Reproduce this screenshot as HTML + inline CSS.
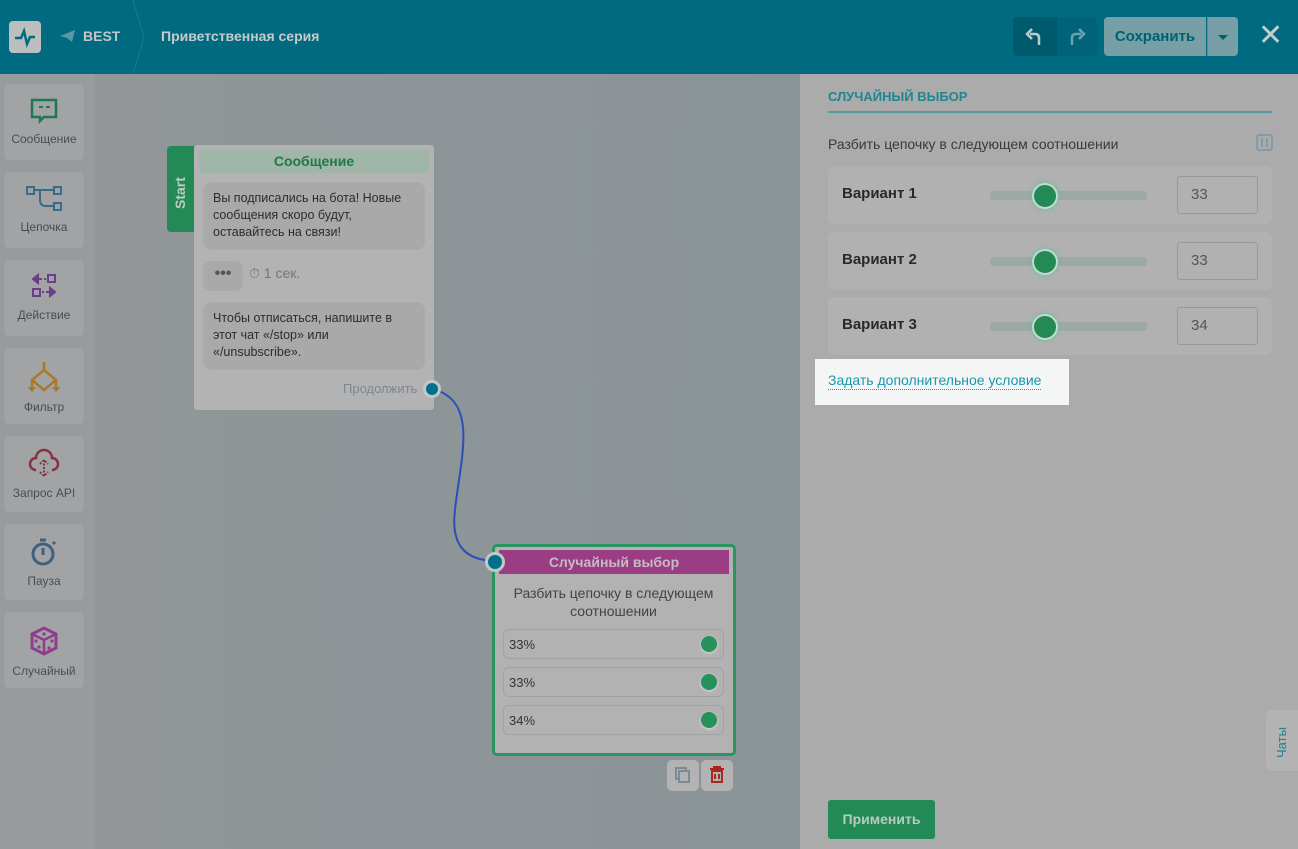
<!DOCTYPE html>
<html><head><meta charset="utf-8"><style>
*{box-sizing:border-box;margin:0;padding:0}
body{width:1298px;height:849px;overflow:hidden;font-family:"Liberation Sans","DejaVu Sans",sans-serif;background:#8e979a;position:relative}
.hdr{position:absolute;left:0;top:0;width:1298px;height:74px;background:#006a80}
.abs{position:absolute}
.side{position:absolute;left:0;top:74px;width:95px;height:775px;background:#999a9c}
.si{position:absolute;left:4px;width:80px;height:76px;background:#a2a3a5;border-radius:5px;text-align:center;font-size:12px;color:#4a4d50}
.si svg{display:block;margin:12px auto 6px}
.canvas{position:absolute;left:95px;top:74px;width:705px;height:775px;background:linear-gradient(90deg,#929698,#8a9498)}
.panel{position:absolute;left:800px;top:74px;width:498px;height:775px;background:#aaabaa}
.card{position:absolute;left:828px;width:444px;height:58px;background:#b0b1b0;border-radius:6px}
.card b{position:absolute;left:14px;top:19px;font-size:15px;color:#2a2a2a}
.track{position:absolute;left:162px;top:25px;width:157px;height:9px;background:#9ca9a5;border-radius:3px}
.knob{position:absolute;left:204px;top:17px;width:26px;height:26px;border-radius:50%;background:#238a56;border:2px solid #c8d8cf;box-shadow:0 0 4px #4c9}
.inp{position:absolute;left:349px;top:10px;width:81px;height:38px;border:1px solid #999;border-radius:3px;font-size:15px;color:#555;padding:9px 0 0 13px}
.row{position:absolute;left:503px;width:221px;height:30px;border:1px solid #9ea3a5;border-radius:6px;font-size:13px;color:#333;padding:7px 0 0 5px}
.row i{position:absolute;right:6px;top:6px;width:16px;height:16px;border-radius:50%;background:#24925a;box-shadow:0 1px 3px #fff8}
</style></head><body>
<div class="hdr">
 <div class="abs" style="left:9px;top:21px;width:32px;height:32px;background:#bdbfbf;border-radius:4px"><svg width="32" height="32"><path d="M6 17h6l3-7 3 13 3-7h5" fill="none" stroke="#006a80" stroke-width="2.5"/></svg></div>
 <svg class="abs" style="left:60px;top:29px" width="16" height="14"><path d="M0 7L15 1 12 13 7 9z" fill="#5c97a6"/></svg>
 <div class="abs" style="left:83px;top:28px;color:#c0c5c7;font-size:14px;font-weight:bold">BEST</div>
 <svg class="abs" style="left:130px;top:0" width="15" height="74"><path d="M3 0L14 37 3 74" fill="none" stroke="#1b7a8e"/></svg>
 <div class="abs" style="left:161px;top:28px;color:#c6cacc;font-size:14px;font-weight:bold">Приветственная серия</div>
 <div class="abs" style="left:1013px;top:17px;width:44px;height:39px;background:#005a6e;border-radius:4px 0 0 4px"><svg width="44" height="39"><path d="M26 28v-7q0-4-4-4h-5" fill="none" stroke="#bcc" stroke-width="2.5"/><path d="M19 12l-5 5 5 5" fill="none" stroke="#bcc" stroke-width="2.5"/></svg></div>
 <div class="abs" style="left:1057px;top:17px;width:40px;height:39px;background:#00637a;border-radius:0 4px 4px 0"><svg width="40" height="39"><path d="M15 28v-7q0-4 4-4h5" fill="none" stroke="#6ba2b0" stroke-width="2.5"/><path d="M22 12l5 5-5 5" fill="none" stroke="#6ba2b0" stroke-width="2.5"/></svg></div>
 <div class="abs" style="left:1104px;top:17px;width:102px;height:39px;background:#76a0a6;border-radius:4px 0 0 4px;color:#006072;font-weight:bold;font-size:15px;line-height:39px;text-align:center">Сохранить</div>
 <div class="abs" style="left:1207px;top:17px;width:31px;height:39px;background:#76a0a6;border-radius:0 4px 4px 0;border-left:1px solid #5d8d95"><div style="margin:18px auto 0;width:0;height:0;border:5px solid transparent;border-top-color:#006072;border-bottom:0"></div></div>
 <div class="abs" style="left:1258px;top:18px;color:#c8cccd;font-size:30px;font-weight:bold">✕</div>
</div>
<div class="side">
 <div class="si" style="top:10px"><svg width="30" height="30"><path d="M3 4h24v17H15l-4 4v-4H3z" fill="none" stroke="#1d7a4e" stroke-width="2.5"/><path d="M10 11h4M17 11h4" stroke="#1d7a4e" stroke-width="2"/></svg>Сообщение</div>
 <div class="si" style="top:98px"><svg width="40" height="30"><rect x="3" y="3" width="7" height="7" fill="none" stroke="#3a6a8a" stroke-width="2"/><rect x="30" y="3" width="7" height="7" fill="none" stroke="#3a6a8a" stroke-width="2"/><rect x="30" y="19" width="7" height="7" fill="none" stroke="#3a6a8a" stroke-width="2"/><path d="M10 6h20M16 6v10q0 6 6 6h8" fill="none" stroke="#3a6a8a" stroke-width="2"/></svg>Цепочка</div>
 <div class="si" style="top:186px"><svg width="30" height="30"><path d="M4 7l5-4v8zM10 7h3M15 7h2" stroke="#6a3e8a" stroke-width="2" fill="#6a3e8a"/><rect x="19" y="3" width="7" height="7" fill="none" stroke="#6a3e8a" stroke-width="2"/><rect x="4" y="17" width="7" height="7" fill="none" stroke="#6a3e8a" stroke-width="2"/><path d="M13 20h2M17 20h3M26 20l-5-4v8z" stroke="#6a3e8a" stroke-width="2" fill="#6a3e8a"/></svg>Действие</div>
 <div class="si" style="top:274px"><svg width="40" height="34"><path d="M20 2v8M8 20l12-10 12 10-12 10zM8 20v8M32 20v8" fill="none" stroke="#a87a28" stroke-width="2.5"/><path d="M4 27h8l-4 5zM28 27h8l-4 5z" fill="#a87a28"/></svg>Фильтр</div>
 <div class="si" style="top:362px"><svg width="34" height="32"><path d="M9 22a6 6 0 0 1 0-12 8 8 0 0 1 16 0 6 6 0 0 1 0 12" fill="none" stroke="#8a3040" stroke-width="2.5"/><path d="M17 12v16M13 16l4-4 4 4M13 24l4 4 4-4" fill="none" stroke="#8a3040" stroke-width="2" stroke-dasharray="2 1.5"/></svg>Запрос API</div>
 <div class="si" style="top:450px"><svg width="32" height="32"><circle cx="15" cy="18" r="10" fill="none" stroke="#3f6180" stroke-width="3"/><path d="M15 12v7M12 4h6M25 6l2 2" stroke="#3f6180" stroke-width="3"/></svg>Пауза</div>
 <div class="si" style="top:538px"><svg width="34" height="34"><path d="M5 10l12-6 12 6v14l-12 6-12-6z" fill="none" stroke="#8e3e8c" stroke-width="3"/><path d="M5 10l12 6 12-6M17 16v14" stroke="#8e3e8c" stroke-width="2.5" fill="none"/><circle cx="17" cy="10" r="1.6" fill="#8e3e8c"/><circle cx="9" cy="17" r="1.6" fill="#8e3e8c"/><circle cx="12" cy="23" r="1.6" fill="#8e3e8c"/><circle cx="22" cy="24" r="1.6" fill="#8e3e8c"/><circle cx="25" cy="17" r="1.6" fill="#8e3e8c"/></svg>Случайный</div>
</div>
<div class="canvas"></div>
<svg class="abs" style="left:420px;top:380px" width="100" height="200"><path d="M12 9C60 20 40 80 35 130 30 170 50 180 74 181" fill="none" stroke="#2b4fb8" stroke-width="2"/></svg>
<div class="abs" style="left:167px;top:146px;width:30px;height:86px;background:#238a55;border-radius:4px 0 0 4px"></div>
<div class="abs" style="left:172px;top:209px;color:#bfcbc4;font-weight:bold;font-size:14px;transform:rotate(-90deg);transform-origin:0 0">Start</div>
<div class="abs" style="left:194px;top:145px;width:240px;height:265px;background:#b3b3b3;border-radius:3px"></div>
<div class="abs" style="left:199px;top:150px;width:230px;height:23px;background:#9fb6a8;text-align:center;color:#1f7a45;font-weight:bold;font-size:14px;line-height:23px">Сообщение</div>
<div class="abs" style="left:203px;top:182px;width:222px;height:68px;background:#a9a9aa;border-radius:9px;padding:8px 10px;font-size:12.5px;line-height:17px;color:#2c2c2c">Вы подписались на бота! Новые сообщения скоро будут, оставайтесь на связи!</div>
<div class="abs" style="left:203px;top:261px;width:40px;height:30px;background:#a9a9aa;border-radius:8px;text-align:center;color:#555;font-weight:bold;line-height:26px">•••</div>
<div class="abs" style="left:249px;top:265px;font-size:14px;color:#6c7880">⏱ 1 сек.</div>
<div class="abs" style="left:203px;top:302px;width:222px;height:68px;background:#a9a9aa;border-radius:9px;padding:8px 10px;font-size:12.5px;line-height:17px;color:#2c2c2c">Чтобы отписаться, напишите в этот чат «/stop» или «/unsubscribe».</div>
<div class="abs" style="left:343px;top:381px;font-size:13px;color:#7d8790">Продолжить</div>
<div class="abs" style="left:423px;top:380px;width:18px;height:18px;border-radius:50%;background:#00708a;border:3px solid #c3c7c8"></div>
<div class="abs" style="left:492px;top:544px;width:244px;height:212px;border:3px solid #2a9561;border-radius:5px;background:#b1b2b1"></div>
<div class="abs" style="left:499px;top:550px;width:230px;height:24px;background:#9b3d84;color:#c8b9c6;font-weight:bold;font-size:14px;text-align:center;line-height:24px">Случайный выбор</div>
<div class="abs" style="left:485px;top:552px;width:20px;height:20px;border-radius:50%;background:#00708a;border:3px solid #c3c7c8"></div>
<div class="abs" style="left:503px;top:584px;width:221px;text-align:center;font-size:14px;line-height:18px;color:#444">Разбить цепочку в следующем соотношении</div>
<div class="row" style="top:629px">33%<i></i></div>
<div class="row" style="top:667px">33%<i></i></div>
<div class="row" style="top:705px">34%<i></i></div>
<div class="abs" style="left:667px;top:760px;width:32px;height:31px;background:#b3b3b3;border-radius:5px"><svg width="32" height="31"><rect x="9" y="8" width="10" height="11" fill="none" stroke="#7d8a94" stroke-width="2"/><rect x="12" y="11" width="10" height="11" fill="#b3b3b3" stroke="#7d8a94" stroke-width="2"/></svg></div>
<div class="abs" style="left:701px;top:760px;width:32px;height:31px;background:#b3b3b3;border-radius:5px"><svg width="32" height="31"><path d="M9 9h14M13 9V7h6v2M11 11h10v11H11z" fill="none" stroke="#a8281f" stroke-width="2"/><path d="M14 14v5M18 14v5" stroke="#a8281f" stroke-width="2"/></svg></div>
<div class="panel"></div>
<div class="abs" style="left:828px;top:89px;color:#1f8590;font-weight:bold;font-size:13px">СЛУЧАЙНЫЙ ВЫБОР</div>
<div class="abs" style="left:828px;top:111px;width:444px;height:2px;background:#4e9ea4"></div>
<div class="abs" style="left:828px;top:136px;font-size:14px;color:#3a3a3a">Разбить цепочку в следующем соотношении</div>
<svg class="abs" style="left:1256px;top:134px" width="17" height="17"><rect x="1" y="1" width="15" height="15" rx="2" fill="none" stroke="#849aa6" stroke-width="2"/><path d="M6 4v9M11 4v9" stroke="#849aa6" stroke-width="2"/></svg>
<div class="card" style="top:166px"><b>Вариант 1</b><div class="track"></div><div class="knob"></div><div class="inp">33</div></div>
<div class="card" style="top:232px"><b>Вариант 2</b><div class="track"></div><div class="knob"></div><div class="inp">33</div></div>
<div class="card" style="top:297px"><b>Вариант 3</b><div class="track"></div><div class="knob"></div><div class="inp">34</div></div>
<div class="abs" style="left:815px;top:359px;width:254px;height:46px;background:#f4f6f5"></div>
<div class="abs" style="left:828px;top:372px;font-size:14px;color:#1b95b0;border-bottom:1px dotted #1b95b0;line-height:17px">Задать дополнительное условие</div>
<div class="abs" style="left:1266px;top:710px;width:40px;height:61px;background:#b2b3b2;border-radius:6px"></div>
<div class="abs" style="left:1274px;top:758px;color:#1f8590;font-size:13px;transform:rotate(-90deg);transform-origin:0 0">Чаты</div>
<div class="abs" style="left:828px;top:800px;width:107px;height:39px;background:#238a56;border-radius:3px;color:#b8cbc0;font-weight:bold;font-size:14px;text-align:center;line-height:39px">Применить</div>
</body></html>
